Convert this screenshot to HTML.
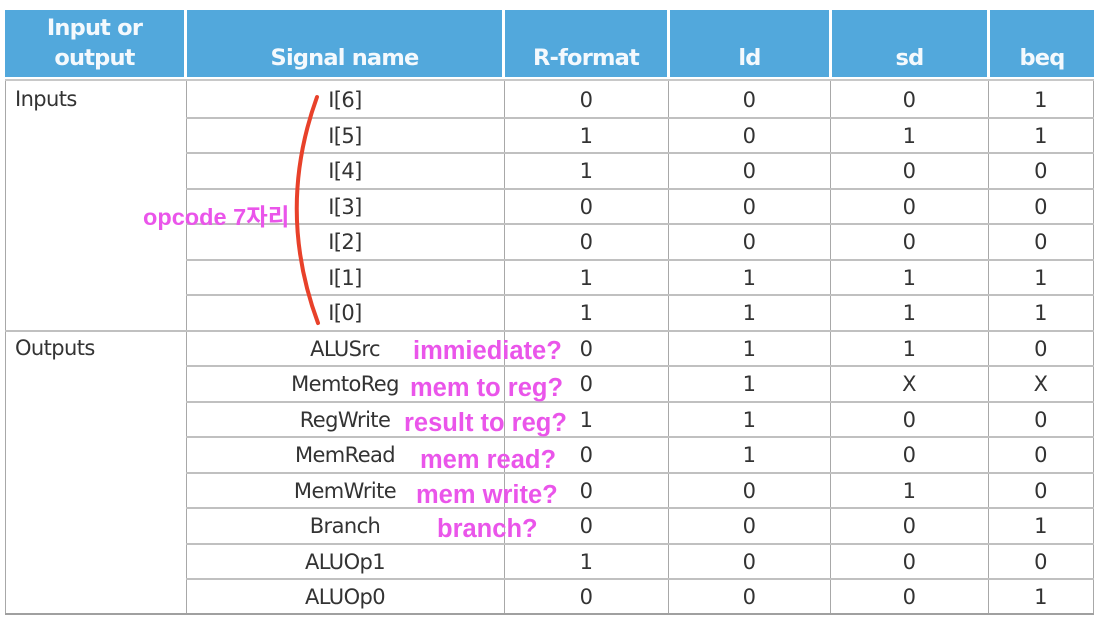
<!DOCTYPE html>
<html><head><meta charset="utf-8"><style>
body{margin:0;width:1100px;height:622px;background:#fff;position:relative;overflow:hidden;font-family:"DejaVu Sans","Liberation Sans",sans-serif;}
.h{position:absolute;top:10px;height:67px;background:#52a8dc;color:#f4f9fd;font-weight:bold;font-size:22.5px;text-align:center;display:flex;align-items:flex-end;justify-content:center;padding-bottom:4px;box-sizing:border-box;line-height:30px;letter-spacing:-0.8px}
.hl{position:absolute;height:1px;background:#b5b5b5}
.vl{position:absolute;width:1px;background:#a8a8a8}
.c{position:absolute;font-size:21px;color:#333;text-align:center;height:35px;line-height:35px;letter-spacing:-0.6px}
.m{position:absolute;font-family:"Liberation Sans","Noto Sans CJK KR",sans-serif;font-weight:bold;font-size:25.5px;color:#ea55ea;white-space:nowrap}
</style></head><body>
<div class="h" style="left:5px;width:179px;">Input or<br>output</div>
<div class="h" style="left:187px;width:315px;">Signal name</div>
<div class="h" style="left:505px;width:162px;">R-format</div>
<div class="h" style="left:670px;width:159px;">ld</div>
<div class="h" style="left:832px;width:155px;">sd</div>
<div class="h" style="left:990px;width:104px;">beq</div>
<div style="position:absolute;left:5px;top:79px;width:1089px;height:2px;background:#c8c8c8"></div>
<div class="vl" style="left:5px;top:81px;height:534px"></div>
<div class="vl" style="left:186px;top:81px;height:534px"></div>
<div class="vl" style="left:504px;top:81px;height:534px"></div>
<div class="vl" style="left:668px;top:81px;height:534px"></div>
<div class="vl" style="left:830px;top:81px;height:534px"></div>
<div class="vl" style="left:988px;top:81px;height:534px"></div>
<div class="vl" style="left:1093px;top:81px;height:534px"></div>
<div style="position:absolute;left:5px;top:613px;width:1089px;height:2px;background:#a0a0a0"></div>
<div id="rows"></div>
<div class="c" style="left:15px;top:82px;">Inputs</div>
<div class="c" style="left:15px;top:331px;">Outputs</div>
<svg style="position:absolute;left:0;top:0" width="1100" height="622"><path d="M317 97 Q276 210 318 323" stroke="#e8412a" stroke-width="4" fill="none" stroke-linecap="round"/></svg>
<div class="m" style="left:143px;top:198px;font-size:23.5px">opcode 7자리</div>
<div class="m" style="left:413px;top:337px;">immiediate?</div>
<div class="m" style="left:410px;top:374px;">mem to reg?</div>
<div class="m" style="left:404px;top:409px;">result to reg?</div>
<div class="m" style="left:420px;top:446px;">mem read?</div>
<div class="m" style="left:416px;top:481px;">mem write?</div>
<div class="m" style="left:437px;top:515px;">branch?</div>
<script>
var d=[["I[6]",0,0,0,1],["I[5]",1,0,1,1],["I[4]",1,0,0,0],["I[3]",0,0,0,0],["I[2]",0,0,0,0],["I[1]",1,1,1,1],["I[0]",1,1,1,1],
["ALUSrc",0,1,1,0],["MemtoReg",0,1,"X","X"],["RegWrite",1,1,0,0],["MemRead",0,1,0,0],["MemWrite",0,0,1,0],["Branch",0,0,0,1],["ALUOp1",1,0,0,0],["ALUOp0",0,0,0,1]];
var cols=[[186,504],[504,668],[668,830],[830,988],[988,1093]];
var h="";
for(var i=0;i<15;i++){var t=82+i*35.5;
 if(i>0){var l=(i==7)?5:186;h+='<div class="hl" style="left:'+l+'px;top:'+Math.round(t-1)+'px;width:'+(1094-l)+'px;height:2px;background:#c0c0c0"></div>';}
 for(var j=0;j<5;j++){h+='<div class="c" style="left:'+cols[j][0]+'px;width:'+(cols[j][1]-cols[j][0])+'px;top:'+(t+1)+'px">'+d[i][j]+'</div>';}
}
document.getElementById("rows").innerHTML=h;
</script>
</body></html>
